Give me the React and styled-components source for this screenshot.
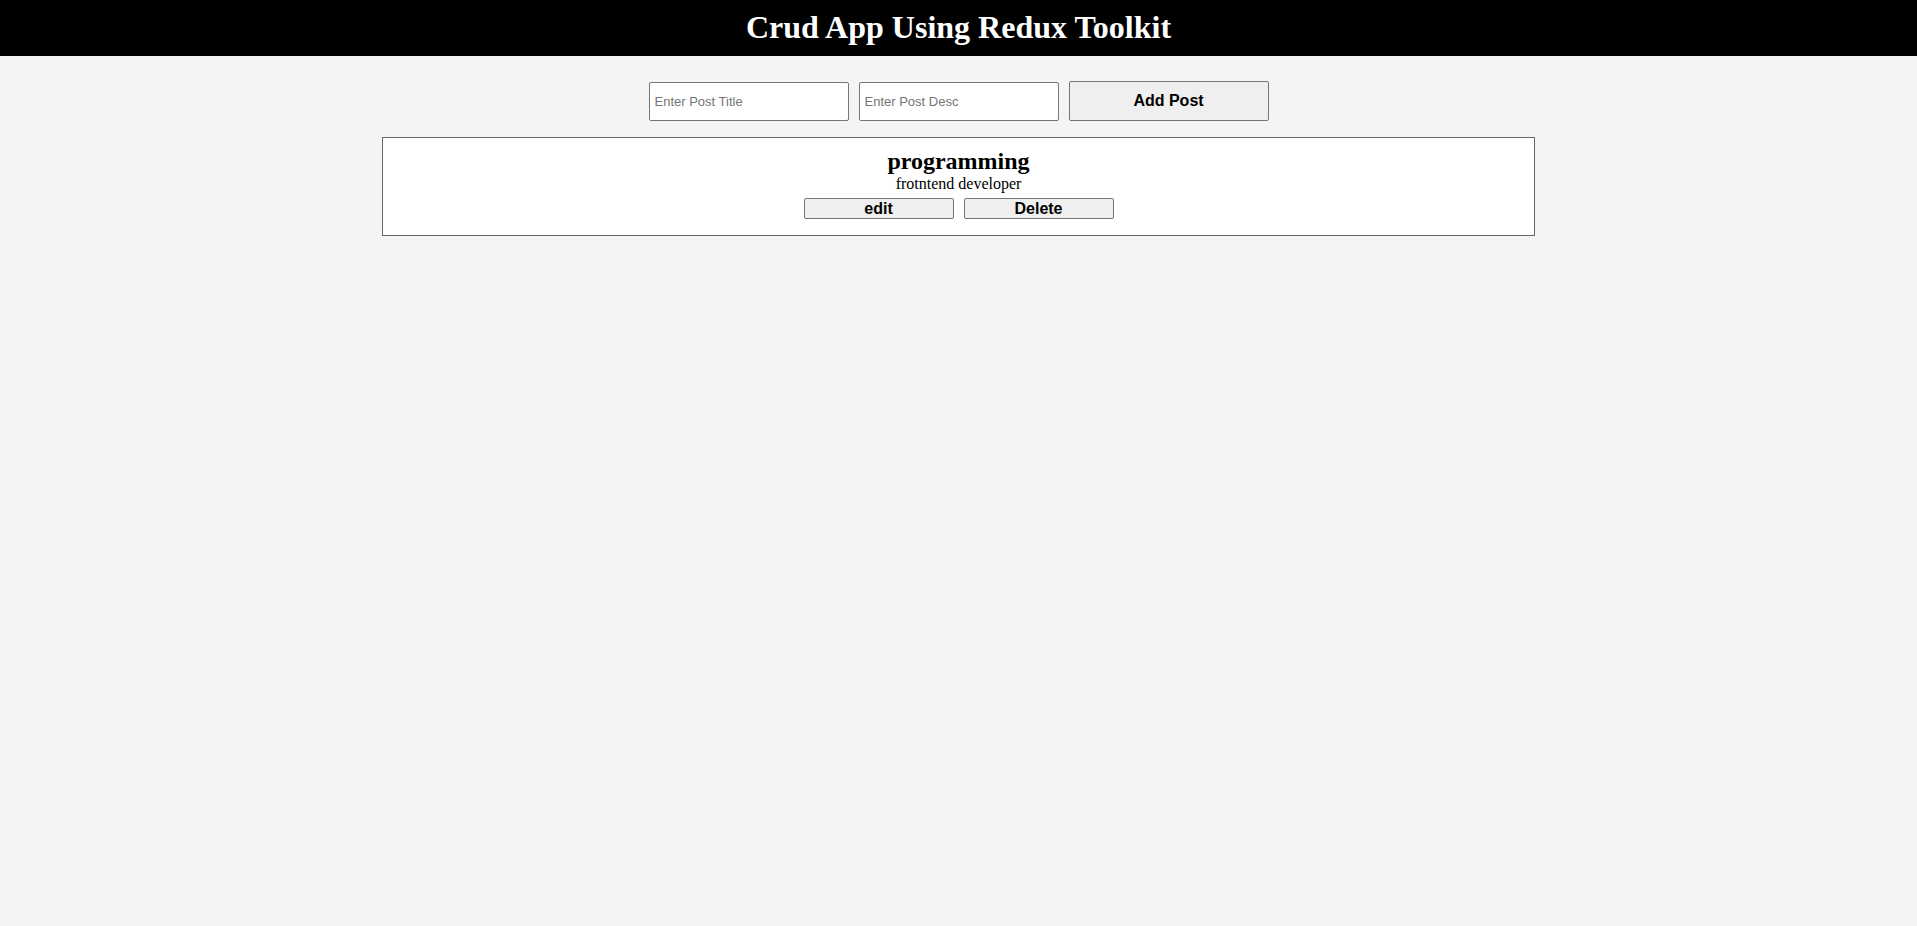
import React, { useState } from "react";
import styled, { createGlobalStyle } from "styled-components";

const GlobalStyle = createGlobalStyle`
	body {
		margin: 0;
		background-color: #f4f4f4;
		font-family: "Liberation Serif", "Times New Roman", serif;
	}
`;

const Header = styled.header`
	height: 56px;
	box-sizing: border-box;
	padding-top: 9px;
	background-color: #000;
`;

const Title = styled.h1`
	margin: 0;
	text-align: center;
	font-size: 32px;
	font-weight: bold;
	line-height: 36px;
	color: #fff;
`;

const Form = styled.div`
	display: flex;
	justify-content: center;
	align-items: center;
	gap: 10px;
	margin-top: 25px;
`;

const Input = styled.input`
	width: 200px;
	height: 39px;
	box-sizing: border-box;
	padding: 1px 5px;
	border: 1px solid #767676;
	border-radius: 2px;
	background-color: #fff;
	font-family: "Liberation Sans", Arial, sans-serif;
	font-size: 13px;
	outline: none;
	&::placeholder {
		color: #757575;
	}
`;

const Button = styled.button`
	width: ${(props) => (props.wide ? "200px" : "150px")};
	height: ${(props) => (props.wide ? "40px" : "21px")};
	box-sizing: border-box;
	padding: 0 6px;
	border: 1px solid #767676;
	border-radius: 2px;
	background-color: #efefef;
	color: #000;
	font-family: "Liberation Sans", Arial, sans-serif;
	font-size: 16px;
	font-weight: bold;
	line-height: 18px;
	cursor: pointer;
`;

const Card = styled.div`
	width: 60%;
	margin: 16px auto 0;
	padding: 10px 0 16px;
	border: 1px solid #666;
	background-color: #fff;
	text-align: center;
`;

const PostTitle = styled.h2`
	margin: 0;
	font-size: 24px;
	font-weight: bold;
`;

const PostDesc = styled.p`
	margin: 0;
	font-size: 16px;
`;

const Actions = styled.div`
	display: flex;
	justify-content: center;
	gap: 10px;
	margin-top: 5px;
`;

const App = () => {
	const [posts] = useState([
		{ id: 1, title: "programming", desc: "frotntend developer" },
	]);

	return (
		<>
			<GlobalStyle />
			<Header>
				<Title>Crud App Using Redux Toolkit</Title>
			</Header>
			<Form>
				<Input type="text" placeholder="Enter Post Title" />
				<Input type="text" placeholder="Enter Post Desc" />
				<Button wide>Add Post</Button>
			</Form>
			{posts.map((post) => (
				<Card key={post.id}>
					<PostTitle>{post.title}</PostTitle>
					<PostDesc>{post.desc}</PostDesc>
					<Actions>
						<Button>edit</Button>
						<Button>Delete</Button>
					</Actions>
				</Card>
			))}
		</>
	);
};

export default App;
